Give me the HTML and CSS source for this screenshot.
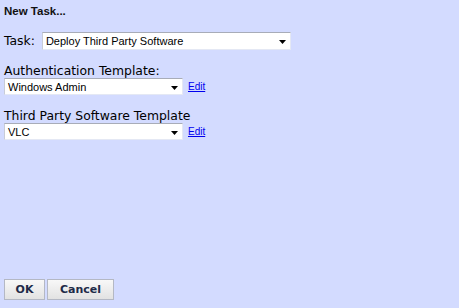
FILE: index.html
```html
<!DOCTYPE html>
<html lang="en">
<head>
    <meta charset="UTF-8">
    <meta name="viewport" content="width=device-width, initial-scale=1.0">
    <title>New Task</title>
    <link rel="stylesheet" href="styles.css">
</head>
<body>

    <div class="dialog">
        <h1 class="title">New Task...</h1>

        <div class="task-row">
            <label class="label" for="task">Task:</label>
            <div class="select select-wide" id="task">
                <span>Deploy Third Party Software</span>
                <svg class="arrow" width="7" height="4" viewBox="0 0 7 4"><path d="M0 0H7L3.5 4Z" fill="#000"/></svg>
            </div>
        </div>

        <div class="field">
            <label class="label">Authentication Template:</label>
            <div class="select-line">
                <div class="select">
                    <span>Windows Admin</span>
                    <svg class="arrow" width="7" height="4" viewBox="0 0 7 4"><path d="M0 0H7L3.5 4Z" fill="#000"/></svg>
                </div>
                <a href="#" class="edit">Edit</a>
            </div>
        </div>

        <div class="field">
            <label class="label">Third Party Software Template</label>
            <div class="select-line">
                <div class="select">
                    <span>VLC</span>
                    <svg class="arrow" width="7" height="4" viewBox="0 0 7 4"><path d="M0 0H7L3.5 4Z" fill="#000"/></svg>
                </div>
                <a href="#" class="edit">Edit</a>
            </div>
        </div>

        <div class="buttons">
            <button class="btn btn-ok">OK</button>
            <button class="btn">Cancel</button>
        </div>
    </div>

</body>
</html>
```

FILE: styles.css
```css
html, body {
    margin: 0;
    height: 100%;
}

body {
    background-color: #d3dbff;
    font-family: "DejaVu Sans", Verdana, sans-serif;
    color: #000;
}

.dialog {
    height: 100%;
    box-sizing: border-box;
    padding: 4px 4px 8px 4px;
    display: flex;
    flex-direction: column;
}

.title {
    margin: 0;
    font-family: "Liberation Sans", Arial, sans-serif;
    font-size: 11.5px;
    font-weight: bold;
    line-height: 14px;
    color: #111;
}

.task-row {
    margin-top: 14px;
    display: flex;
    align-items: center;
    gap: 7px;
}

.label {
    display: block;
    font-size: 12.4px;
    line-height: 14px;
}

.field {
    margin-top: 14px;
}

.select-line {
    display: flex;
    align-items: center;
    gap: 5px;
}

.select {
    width: 179px;
    height: 17px;
    box-sizing: border-box;
    background-color: #fff;
    border: 1px solid #e4e8f4;
    border-top-color: #a8acb8;
    border-left-color: #c8ccd8;
    padding: 0 4px 0 3px;
    display: flex;
    align-items: center;
    justify-content: space-between;
    font-family: "Liberation Sans", Arial, sans-serif;
    font-size: 11px;
}

.select-wide {
    width: 249px;
    height: 18px;
}

.arrow {
    flex-shrink: 0;
    margin-top: 2px;
}

.edit {
    font-family: "Liberation Sans", Arial, sans-serif;
    font-size: 10px;
    color: #0000ee;
    text-decoration: underline;
}

.buttons {
    margin-top: auto;
    display: flex;
    gap: 2px;
}

.btn {
    height: 21px;
    padding: 0 12px;
    border: 1px solid #b4b8c4;
    background: linear-gradient(#f8f8f8, #e2e2e2);
    font-family: "DejaVu Sans", Verdana, sans-serif;
    font-size: 11px;
    font-weight: bold;
    color: #1e2a48;
}

.btn-ok {
    width: 41px;
    padding: 0;
}
```
